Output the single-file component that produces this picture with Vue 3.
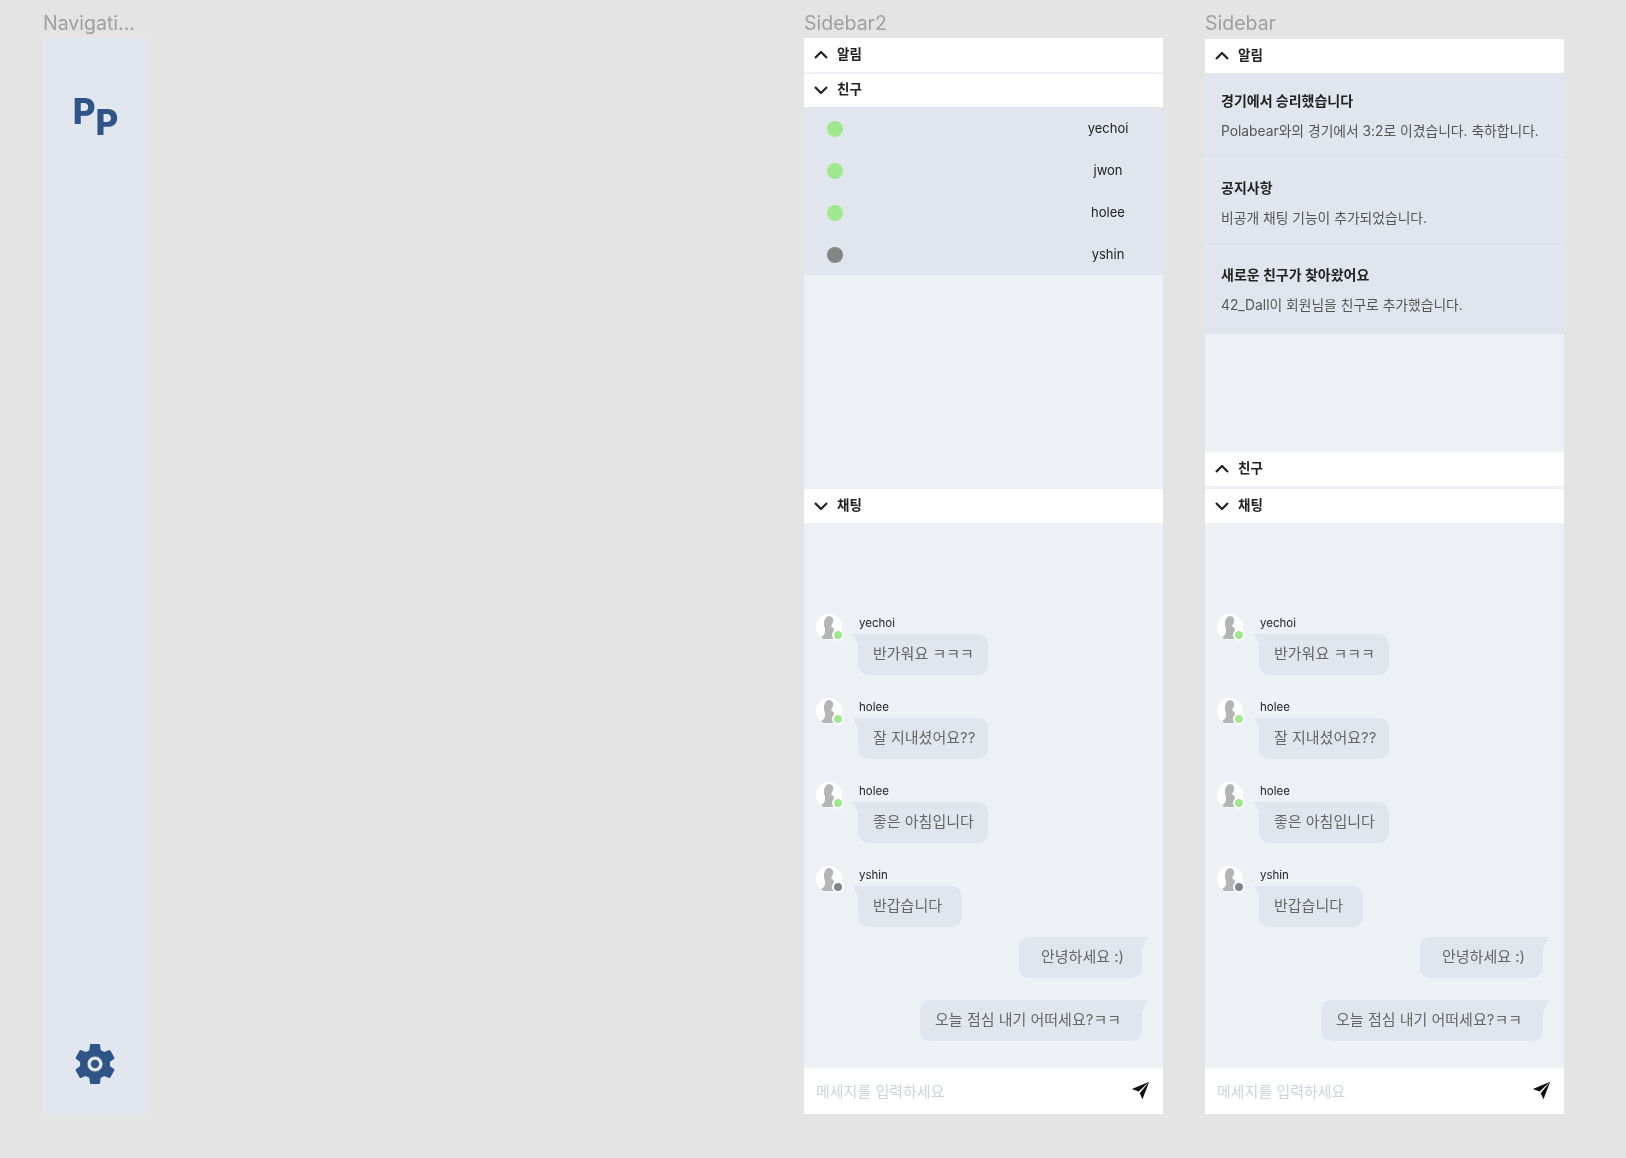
<script setup>
const friends = [
  { name: 'yechoi', on: true },
  { name: 'jwon', on: true },
  { name: 'holee', on: true },
  { name: 'yshin', on: false },
]
const notices = [
  { title: '경기에서 승리했습니다', body: 'Polabear와의 경기에서 3:2로 이겼습니다. 축하합니다.' },
  { title: '공지사항', body: '비공개 채팅 기능이 추가되었습니다.' },
  { title: '새로운 친구가 찾아왔어요', body: '42_Dall이 회원님을 친구로 추가했습니다.' },
]
const messages = [
  { name: 'yechoi', on: true, text: '반가워요 ㅋㅋㅋ', wide: true },
  { name: 'holee', on: true, text: '잘 지내셨어요??', wide: true },
  { name: 'holee', on: true, text: '좋은 아침입니다', wide: true },
  { name: 'yshin', on: false, text: '반갑습니다', wide: false },
]
const mine = ['안녕하세요 :)', '오늘 점심 내기 어떠세요?ㅋㅋ']
</script>

<template>
  <div class="page">
    <section class="col nav-col">
      <div class="label">Navigati...</div>
      <nav class="nav">
        <div class="logo"><span>P</span><span class="low">P</span></div>
        <svg class="gear" viewBox="0 0 24 24">
          <path fill="#2f5488" d="M19.14 12.94c.04-.3.06-.61.06-.94 0-.32-.02-.64-.07-.94l2.03-1.58c.18-.14.23-.41.12-.61l-1.92-3.32c-.12-.22-.37-.29-.59-.22l-2.39.96c-.5-.38-1.03-.7-1.62-.94l-.36-2.54c-.04-.24-.24-.41-.48-.41h-3.84c-.24 0-.43.17-.47.41l-.36 2.54c-.59.24-1.13.57-1.62.94l-2.39-.96c-.22-.08-.47 0-.59.22L2.74 8.87c-.12.21-.08.47.12.61l2.03 1.58c-.05.3-.09.63-.09.94s.02.64.07.94l-2.03 1.58c-.18.14-.23.41-.12.61l1.92 3.32c.12.22.37.29.59.22l2.39-.96c.5.38 1.03.7 1.62.94l.36 2.54c.05.24.24.41.48.41h3.84c.24 0 .44-.17.47-.41l.36-2.54c.59-.24 1.13-.56 1.62-.94l2.39.96c.22.08.47 0 .59-.22l1.92-3.32c.12-.22.07-.47-.12-.61l-2.01-1.58zM12 15.6c-1.98 0-3.6-1.62-3.6-3.6s1.62-3.6 3.6-3.6 3.6 1.62 3.6 3.6-1.62 3.6-3.6 3.6z"/>
          <circle cx="12" cy="12" r="2" fill="#2f5488"/>
        </svg>
      </nav>
    </section>

    <section class="col side-col first">
      <div class="label">Sidebar2</div>
      <div class="sidebar">
        <div class="top">
          <header class="head">
            <svg class="chev" viewBox="0 0 14 8"><path d="M1 7l6-6 6 6"/></svg>
            <span>알림</span>
          </header>
          <header class="head second">
            <svg class="chev" viewBox="0 0 14 8"><path d="M1 1l6 6 6-6"/></svg>
            <span>친구</span>
          </header>
          <ul class="friends">
            <li v-for="f in friends" :key="f.name" class="friend">
              <i class="dot" :class="{ off: !f.on }"></i>
              <span class="fname">{{ f.name }}</span>
            </li>
          </ul>
        </div>
        <div class="chat">
          <header class="head">
            <svg class="chev" viewBox="0 0 14 8"><path d="M1 1l6 6 6-6"/></svg>
            <span>채팅</span>
          </header>
          <div class="chat-body">
            <div v-for="(m, i) in messages" :key="i" class="msg">
              <div class="avatar">
                <svg viewBox="0 0 26 26">
                  <path fill="#b5b5b5" d="M13 2c3 0 4.400 2.200 4.200 4.800-.1 1.800-1 3.200-1.700 4.200-.4.6-.3 1.500.4 2 1 .7 2.100 1.200 2.100 2.600V25H8l-3.700-.3c.6-1.800 3.300-3 4-4.400.7-1.600.9-3.800.6-5.600-.2-1.400-.9-2.600-1-4C7.600 7 9.700 2 13 2z"/>
                </svg>
                <i class="status" :class="{ off: !m.on }"></i>
              </div>
              <div class="msg-main">
                <div class="uname">{{ m.name }}</div>
                <div class="bubble" :class="{ wide: m.wide }">{{ m.text }}</div>
              </div>
            </div>
            <div v-for="t in mine" :key="t" class="bubble own">{{ t }}</div>
          </div>
          <footer class="composer">
            <span class="placeholder">메세지를 입력하세요</span>
            <svg class="send" viewBox="0 0 24 24"><path d="M23 1L1 10l8.600 3.400L23 1 11 15.500 14.500 23z"/></svg>
          </footer>
        </div>
      </div>
    </section>

    <section class="col side-col last">
      <div class="label">Sidebar</div>
      <div class="sidebar">
        <div class="top">
          <header class="head">
            <svg class="chev" viewBox="0 0 14 8"><path d="M1 7l6-6 6 6"/></svg>
            <span>알림</span>
          </header>
          <div v-for="n in notices" :key="n.title" class="notice">
            <div class="ntitle">{{ n.title }}</div>
            <div class="nbody">{{ n.body }}</div>
          </div>
          <header class="head pushed">
            <svg class="chev" viewBox="0 0 14 8"><path d="M1 7l6-6 6 6"/></svg>
            <span>친구</span>
          </header>
        </div>
        <div class="chat">
          <header class="head">
            <svg class="chev" viewBox="0 0 14 8"><path d="M1 1l6 6 6-6"/></svg>
            <span>채팅</span>
          </header>
          <div class="chat-body">
            <div v-for="(m, i) in messages" :key="i" class="msg">
              <div class="avatar">
                <svg viewBox="0 0 26 26">
                  <path fill="#b5b5b5" d="M13 2c3 0 4.400 2.200 4.200 4.800-.1 1.800-1 3.200-1.700 4.200-.4.6-.3 1.500.4 2 1 .7 2.100 1.200 2.100 2.600V25H8l-3.700-.3c.6-1.800 3.300-3 4-4.400.7-1.600.9-3.800.6-5.600-.2-1.400-.9-2.600-1-4C7.600 7 9.700 2 13 2z"/>
                </svg>
                <i class="status" :class="{ off: !m.on }"></i>
              </div>
              <div class="msg-main">
                <div class="uname">{{ m.name }}</div>
                <div class="bubble" :class="{ wide: m.wide }">{{ m.text }}</div>
              </div>
            </div>
            <div v-for="t in mine" :key="t" class="bubble own">{{ t }}</div>
          </div>
          <footer class="composer">
            <span class="placeholder">메세지를 입력하세요</span>
            <svg class="send" viewBox="0 0 24 24"><path d="M23 1L1 10l8.600 3.400L23 1 11 15.500 14.500 23z"/></svg>
          </footer>
        </div>
      </div>
    </section>
  </div>
</template>

<style>
html, body { margin: 0; background: #e4e4e4; }
</style>

<style scoped>
.page {
  display: flex;
  height: 1158px;
  box-sizing: border-box;
  padding: 10px 0 0 43px;
  background: #e4e4e4;
  font-family: "Inter", "Noto Sans CJK KR", sans-serif;
  filter: blur(0.7px);
  overflow: hidden;
}
.col { display: flex; flex-direction: column; }
.nav-col { width: 105px; }
.side-col { width: 359px; margin-left: 42px; }
.side-col.first { margin-left: 656px; }
.label {
  height: 28px;
  line-height: 27px;
  font-size: 19.5px;
  color: #a0a0a0;
  white-space: nowrap;
}
.nav {
  height: 1077px;
  background: #e1e6ef;
  display: flex;
  flex-direction: column;
  align-items: center;
  justify-content: space-between;
  padding: 55px 0 26px;
  box-sizing: border-box;
}
.logo {
  display: flex;
  color: #2f5488;
  font: 800 35px/36px "Inter", sans-serif;
}
.logo .low { margin-top: 11px; }
.gear { width: 50px; height: 50px; display: block; margin-right: 2px; }

.sidebar {
  height: 1076px;
  display: flex;
  flex-direction: column;
  background: #edf0f5;
}
.last .sidebar { margin-top: 1px; height: 1075px; }
.top { height: 451px; display: flex; flex-direction: column; }
.last .top { height: 450px; }
.head {
  height: 34px;
  flex: none;
  box-sizing: border-box;
  padding-left: 10px;
  display: flex;
  align-items: center;
  gap: 9px;
  background: #fff;
  color: #222;
  font-size: 13.5px;
  font-weight: 600;
}
.head span { margin-bottom: 5px; }
.head.second { margin-top: 2px; height: 33px; }
.head.pushed { margin-top: auto; margin-bottom: 3px; }
.chev { width: 14px; height: 8px; fill: none; stroke: #222; stroke-width: 2.2; margin-top: -1px; }

.friends { list-style: none; margin: 0; padding: 0; background: #e1e6ee; }
.friend {
  height: 42px;
  display: grid;
  grid-template-columns: 1fr 110px;
  align-items: center;
  padding: 0 0 0 23px;
  color: #222;
  font-size: 13px;
}
.dot { width: 16px; height: 16px; border-radius: 50%; background: #a0e88e; margin-top: 1px; }
.dot.off { background: #858585; }
.fname { text-align: center; }

.notice {
  height: 87px;
  box-sizing: border-box;
  background: #e1e6ee;
  padding: 18px 0 0 16px;
  border-bottom: 1.5px solid #e9edf3;
}
.notice:last-of-type { border-bottom: 0; }
.ntitle { font-size: 14px; line-height: 20px; font-weight: 700; color: #222; }
.nbody { margin-top: 10px; font-size: 13.8px; line-height: 20px; color: #555; white-space: nowrap; }

.chat { height: 625px; display: flex; flex-direction: column; }
.chat-body {
  flex: 1;
  display: flex;
  flex-direction: column;
  justify-content: flex-end;
  padding: 0 21px 27px 12px;
  box-sizing: border-box;
}
.msg { display: flex; gap: 17px; margin-bottom: 23px; }
.msg:nth-last-of-type(3) { margin-bottom: 10px; }
.avatar { position: relative; width: 26px; height: 26px; flex: none; border-radius: 50%; background: #fff; }
.avatar svg { width: 26px; height: 26px; display: block; border-radius: 50%; }
.status {
  position: absolute;
  right: -2px;
  bottom: -1px;
  width: 8px;
  height: 8px;
  border-radius: 50%;
  background: #a0e88e;
  border: 2px solid #fff;
}
.status.off { background: #858585; }
.msg-main { display: flex; flex-direction: column; margin-left: -1px; }
.uname { height: 20px; line-height: 18px; font-size: 11.5px; color: #222; padding-left: 1px; }
.bubble {
  position: relative;
  height: 41px;
  line-height: 40px;
  box-sizing: border-box;
  padding: 0 20px 0 15px;
  background: #e1e6ee;
  border-radius: 0 10px 10px 10px;
  color: #666;
  font-size: 15px;
  width: max-content;
  white-space: nowrap;
}
.bubble.wide { width: 130px; padding-right: 0; }
.bubble::before {
  content: "";
  position: absolute;
  top: 0;
  left: -5px;
  width: 6px;
  height: 12px;
  background: #e1e6ee;
  clip-path: polygon(0 0, 100% 0, 100% 100%);
}
.bubble.own {
  align-self: flex-end;
  border-radius: 10px 0 10px 10px;
  padding: 0 18px 0 22px;
}
.bubble.own + .bubble.own { margin-top: 22px; padding: 0 21px 0 15px; }
.bubble.own::before {
  left: auto;
  right: -6px;
  clip-path: polygon(0 0, 100% 0, 0 100%);
}
.composer {
  height: 46px;
  flex: none;
  background: #fff;
  display: flex;
  align-items: center;
  justify-content: space-between;
  padding: 0 13px 0 12px;
  box-sizing: border-box;
}
.placeholder { font-size: 15px; color: #ccd3de; margin-bottom: 2px; }
.send { width: 19px; height: 19px; fill: #111; margin-bottom: 1px; }
</style>
